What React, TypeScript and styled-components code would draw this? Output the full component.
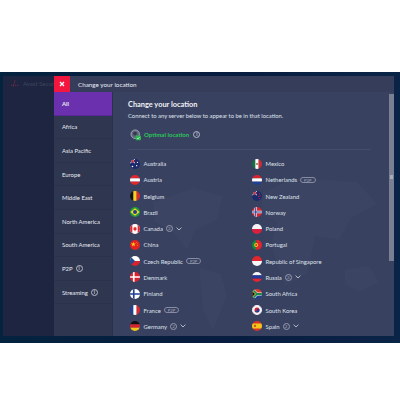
import React from "react";
import styled, { createGlobalStyle } from "styled-components";

const Global = createGlobalStyle`
  html, body { margin: 0; padding: 0; background: #fff; }
  #root { width: 400px; height: 416px; overflow: hidden; }
  * { box-sizing: border-box; }
`;

const Page = styled.div`
  width: 400px;
  height: 416px;
  padding-top: 72px;
  font-family: Lato, "Open Sans", sans-serif;
  color: #e6e8f0;
`;
const Frame = styled.div`
  height: 271px;
  padding: 4px 6px 7px 3px;
  background: linear-gradient(90deg, #04233f 0%, #071c3e 50%, #0a2447 100%);
  display: flex;
`;
const Sidebar = styled.aside`
  width: 51px;
  flex: none;
  background: #1e2540;
  padding: 3px 0 0 7px;
  display: flex;
  align-items: flex-start;
  gap: 3px;
  overflow: hidden;
`;
const BrandLogo = styled.svg`
  width: 10px;
  height: 9px;
  flex: none;
`;
const BrandText = styled.span`
  font-size: 6px;
  line-height: 9px;
  color: #3f455b;
  white-space: nowrap;
`;
const Panel = styled.div`
  flex: 1;
  min-width: 0;
  display: flex;
  flex-direction: column;
  background: #343c58;
`;
const TitleBar = styled.header`
  height: 16px;
  flex: none;
  display: flex;
  align-items: center;
  background: #353d5a;
`;
const CloseButton = styled.div`
  width: 16px;
  height: 16px;
  flex: none;
  background: #f3173f;
  display: grid;
  place-items: center;
`;
const TitleText = styled.span`
  margin-left: 8px;
  font-size: 6.3px;
  color: #e8eaf2;
`;
const Body = styled.div`
  flex: 1;
  min-height: 0;
  display: flex;
`;
const Menu = styled.nav`
  width: 59px;
  flex: none;
  background: #2e3650;
  border-right: 1px solid #2a3149;
`;
const MenuItem = styled.div<{ $active?: boolean }>`
  height: 23.6px;
  padding-left: 8px;
  display: flex;
  align-items: center;
  gap: 3px;
  font-size: 5.9px;
  color: #e8eaf2;
  font-weight: ${(p) => (p.$active ? 700 : 400)};
  background: ${(p) => (p.$active ? "#6a30ad" : "transparent")};
  border-bottom: 1px solid ${(p) => (p.$active ? "#5a2a98" : "#2b324b")};
`;
const Content = styled.main`
  position: relative;
  flex: 1;
  min-width: 0;
  padding: 7.5px 0 0 15px;
  background: #394160;
  overflow: hidden;
`;
const MapArt = styled.svg`
  position: absolute;
  left: 0;
  top: 60px;
  width: 276px;
  height: 185px;
`;
const Scrollbar = styled.div`
  position: absolute;
  top: 2px;
  right: 0;
  width: 5.5px;
  height: 167px;
  background: #7a8094;
`;
const ScrollGrip = styled.div`
  position: absolute;
  top: 81px;
  left: 1px;
  width: 3.5px;
  height: 4px;
  background: #a9adba;
`;
const Heading = styled.h1`
  position: relative;
  margin: 0;
  font-size: 7.4px;
  line-height: 9px;
  font-weight: 700;
  color: #f1f2f7;
`;
const Lead = styled.p`
  position: relative;
  margin: 2px 0 0;
  font-size: 5.85px;
  line-height: 9px;
  color: #dfe2ec;
`;
const Optimal = styled.div`
  position: relative;
  margin-top: 9px;
  padding-left: 2px;
  display: flex;
  align-items: center;
  height: 12px;
  font-size: 6.1px;
  font-weight: 700;
  color: #2bc45a;
`;
const OptimalLabel = styled.span`
  margin: 0 4px 0 2px;
`;
const Divider = styled.hr`
  position: relative;
  width: 243px;
  margin: 8px 0 6px;
  border: none;
  border-top: 1px solid #454d6a;
`;
const Columns = styled.div`
  position: relative;
  padding-left: 2px;
  display: grid;
  grid-template-columns: 122px 1fr;
  grid-auto-flow: column;
  grid-template-rows: repeat(11, 16.28px);
`;
const Row = styled.div`
  display: flex;
  align-items: center;
  font-size: 5.9px;
  color: #dfe2ec;
  white-space: nowrap;
`;
const FlagSvg = styled.svg`
  width: 10px;
  height: 10px;
  flex: none;
  border-radius: 50%;
  margin-right: 3.5px;
`;
const Pill = styled.span`
  margin-left: 3px;
  padding: 0 3px;
  height: 6px;
  line-height: 5px;
  font-size: 4.2px;
  border: 0.6px solid #868ca2;
  border-radius: 3px;
  color: #a4a9bb;
`;
const Count = styled.span`
  margin-left: 3px;
  width: 7px;
  height: 7px;
  border-radius: 50%;
  border: 0.6px solid #969bb0;
  font-size: 4.4px;
  line-height: 5.8px;
  text-align: center;
  color: #a4a9bb;
`;
const InfoMark = styled.span`
  width: 7px;
  height: 7px;
  flex: none;
  border-radius: 50%;
  border: 0.7px solid #b6bac8;
  font-size: 4.6px;
  font-weight: 700;
  line-height: 5.6px;
  text-align: center;
  color: #c9ccd8;
`;
const Chevron = styled.svg`
  width: 6px;
  height: 4px;
  margin-left: 3px;
`;

type FlagName = keyof typeof flags;
const tri = (a: string, b: string, c: string) => (
  <>
    <rect width="4" height="12" fill={a} />
    <rect x="4" width="4" height="12" fill={b} />
    <rect x="8" width="4" height="12" fill={c} />
  </>
);
const hz = (a: string, b: string, c: string) => (
  <>
    <rect width="12" height="4" fill={a} />
    <rect y="4" width="12" height="4" fill={b} />
    <rect y="8" width="12" height="4" fill={c} />
  </>
);
const ensign = (
  <>
    <rect width="12" height="12" fill="#1a2a6c" />
    <path d="M0 0l6 5M6 0L0 5" stroke="#fff" strokeWidth="1" />
    <path d="M3 0v5M0 2.5h6" stroke="#d8232f" strokeWidth="1" />
  </>
);
const nordic = (bg: string, cross: string, inner?: string) => (
  <>
    <rect width="12" height="12" fill={bg} />
    <path d="M4.5 0v12M0 6h12" stroke={cross} strokeWidth={inner ? 3 : 2} />
    {inner && <path d="M4.5 0v12M0 6h12" stroke={inner} strokeWidth="1.4" />}
  </>
);
const flags = {
  au: <>{ensign}<circle cx="9" cy="4" r=".8" fill="#fff" /><circle cx="8" cy="8" r=".8" fill="#fff" /><circle cx="3" cy="9" r="1" fill="#fff" /></>,
  at: hz("#e0262e", "#fff", "#e0262e"),
  be: tri("#111", "#f5d020", "#e0262e"),
  br: <><rect width="12" height="12" fill="#1f9a3d" /><path d="M6 1.5L11.5 6 6 10.5.5 6z" fill="#f6d91f" /><circle cx="6" cy="6" r="2.4" fill="#1f3f94" /></>,
  ca: <><rect width="12" height="12" fill="#fff" /><rect width="2.8" height="12" fill="#e0262e" /><rect x="9.2" width="2.8" height="12" fill="#e0262e" /><path d="M6 3l1 1.6 1-.3-.4 2 .6.5-1.7.8v1H5.5v-1l-1.7-.8.6-.5-.4-2 1 .3z" fill="#e0262e" /></>,
  cn: <><rect width="12" height="12" fill="#e3211f" /><path d="M4 2.2l.7 2.1H7L5.2 5.6l.7 2.1L4 6.4 2.2 7.7l.7-2.1L1 4.3h2.3z" fill="#f7d51d" /><circle cx="7.8" cy="2.8" r=".5" fill="#f7d51d" /><circle cx="8.8" cy="4.6" r=".5" fill="#f7d51d" /><circle cx="8.6" cy="6.6" r=".5" fill="#f7d51d" /></>,
  cz: <><rect width="12" height="6" fill="#fff" /><rect y="6" width="12" height="6" fill="#d8232f" /><path d="M0 0l6 6-6 6z" fill="#1f4b93" /></>,
  dk: nordic("#d8232f", "#fff"),
  fi: nordic("#fff", "#1f3f94"),
  fr: tri("#1f3f94", "#fff", "#e0262e"),
  de: hz("#111", "#d8232f", "#f3c51b"),
  mx: <>{tri("#14713f", "#fff", "#cf2a35")}<circle cx="6" cy="6" r="1.2" fill="#8d6b3a" /></>,
  nl: hz("#d8232f", "#fff", "#1f3f94"),
  nz: <>{ensign}<circle cx="9" cy="3.5" r=".7" fill="#d8232f" /><circle cx="8" cy="6.5" r=".7" fill="#d8232f" /><circle cx="10" cy="6" r=".7" fill="#d8232f" /><circle cx="9" cy="9" r=".7" fill="#d8232f" /></>,
  no: nordic("#d8232f", "#fff", "#1f3f94"),
  pl: <><rect width="12" height="6" fill="#f4f4f6" /><rect y="6" width="12" height="6" fill="#dc1f3c" /></>,
  pt: <><rect width="5" height="12" fill="#128a3c" /><rect x="5" width="7" height="12" fill="#e0262e" /><circle cx="5" cy="6" r="2.4" fill="#f4d21f" /><circle cx="5" cy="6" r="1.2" fill="#d8232f" /></>,
  sg: <><rect width="12" height="6" fill="#e0262e" /><rect y="6" width="12" height="6" fill="#f6f6f8" /></>,
  ru: hz("#f6f6f8", "#27389c", "#e0262e"),
  za: <><rect width="12" height="6" fill="#de3a2f" /><rect y="6" width="12" height="6" fill="#1f3f94" /><path d="M0 0l6 6-6 6M6 6h6" stroke="#fff" strokeWidth="3.4" fill="none" /><path d="M0 0l6 6-6 6M6 6h6" stroke="#1c8a46" strokeWidth="2.2" fill="none" /><path d="M0 2l4 4-4 4z" fill="#111" stroke="#f4c81f" strokeWidth=".7" /></>,
  kr: <><rect width="12" height="12" fill="#f6f6f8" /><circle cx="6" cy="6" r="3" fill="#d8232f" /><path d="M3 6a3 3 0 0 0 6 0 1.5 1.5 0 0 0-3 0 1.5 1.5 0 0 1-3 0z" fill="#1f3f94" /><path d="M1 3l1.5-1.6M1 9l1.5 1.6M11 3L9.5 1.4M11 9l-1.5 1.6" stroke="#222" strokeWidth=".8" /></>,
  es: <><rect width="12" height="12" fill="#d8322a" /><rect y="3" width="12" height="6" fill="#f3c51b" /><rect x="2.6" y="4.6" width="2" height="2.6" fill="#b5482a" /></>,
};

const Flag = ({ name }: { name: FlagName }) => (
  <FlagSvg viewBox="0 0 12 12" aria-hidden="true">{flags[name]}</FlagSvg>
);

type Country = { name: string; flag: FlagName; p2p?: boolean; count?: number };
const countries: Country[] = [
  { name: "Australia", flag: "au" },
  { name: "Austria", flag: "at" },
  { name: "Belgium", flag: "be" },
  { name: "Brazil", flag: "br" },
  { name: "Canada", flag: "ca", count: 2 },
  { name: "China", flag: "cn" },
  { name: "Czech Republic", flag: "cz", p2p: true },
  { name: "Denmark", flag: "dk" },
  { name: "Finland", flag: "fi" },
  { name: "France", flag: "fr", p2p: true },
  { name: "Germany", flag: "de", count: 2 },
  { name: "Mexico", flag: "mx" },
  { name: "Netherlands", flag: "nl", p2p: true },
  { name: "New Zealand", flag: "nz" },
  { name: "Norway", flag: "no" },
  { name: "Poland", flag: "pl" },
  { name: "Portugal", flag: "pt" },
  { name: "Republic of Singapore", flag: "sg" },
  { name: "Russia", flag: "ru", count: 2 },
  { name: "South Africa", flag: "za" },
  { name: "South Korea", flag: "kr" },
  { name: "Spain", flag: "es", count: 2 },
];
const regions = ["All", "Africa", "Asia Pacific", "Europe", "Middle East", "North America", "South America", "P2P", "Streaming"];

export default function App() {
  return (
    <Page>
      <Global />
      <Frame>
        <Sidebar>
          <BrandLogo viewBox="0 0 11 9" aria-hidden="true">
            <path d="M1 6.5h8M5.5 1L3.5 8" stroke="#7a2a4a" strokeWidth="1" fill="none" strokeDasharray="1.4 .8" />
          </BrandLogo>
          <BrandText>Avast SecureLine</BrandText>
        </Sidebar>
        <Panel>
          <TitleBar>
            <CloseButton>
              <svg width="6" height="6" viewBox="0 0 6 6" aria-hidden="true">
                <path d="M1 1l4 4M5 1L1 5" stroke="#fff" strokeWidth="1.3" />
              </svg>
            </CloseButton>
            <TitleText>Change your location</TitleText>
          </TitleBar>
          <Body>
            <Menu>
              {regions.map((r, i) => (
                <MenuItem key={r} $active={i === 0}>
                  {r}
                  {(r === "P2P" || r === "Streaming") && <InfoMark>i</InfoMark>}
                </MenuItem>
              ))}
            </Menu>
            <Content>
              <MapArt viewBox="0 0 276 185" aria-hidden="true">
                <g fill="#3c4463">
                  <path d="M40 50l40-14 30 8-6 24-22 10-8 20-14-18-18-10z" />
                  <path d="M86 116l22 6 6 22-14 34-10-20z" />
                  <path d="M150 40l34-14 60 4 20 22-26 14-12 22-24-4-8 38-22 12-14-40 6-24-16-10z" />
                  <path d="M232 118l24-4 10 16-20 10-14-8z" />
                </g>
              </MapArt>
              <Scrollbar><ScrollGrip /></Scrollbar>
              <Heading>Change your location</Heading>
              <Lead>Connect to any server below to appear to be in that location.</Lead>
              <Optimal>
                <svg width="12" height="12" viewBox="0 0 12 12" aria-hidden="true">
                  <circle cx="5.2" cy="5.2" r="4.2" fill="#5b6279" stroke="#aab0bf" strokeWidth="0.9" />
                  <circle cx="5" cy="4.6" r="1.8" fill="#33394f" />
                  <rect x="5.6" y="6.6" width="5.4" height="4.6" rx="1" fill="#2bb84e" />
                  <path d="M7 9l1 1 1.6-1.8" stroke="#fff" strokeWidth=".6" fill="none" />
                </svg>
                <OptimalLabel>Optimal location</OptimalLabel>
                <InfoMark>i</InfoMark>
              </Optimal>
              <Divider />
              <Columns>
                {countries.map((c) => (
                  <Row key={c.name}>
                    <Flag name={c.flag} />
                    {c.name}
                    {c.p2p && <Pill>P2P</Pill>}
                    {c.count && <Count>{c.count}</Count>}
                    {c.count && (
                      <Chevron viewBox="0 0 6 4" aria-hidden="true">
                        <path d="M.6.6L3 3 5.4.6" stroke="#d5d8e2" strokeWidth=".8" fill="none" />
                      </Chevron>
                    )}
                  </Row>
                ))}
              </Columns>
            </Content>
          </Body>
        </Panel>
      </Frame>
    </Page>
  );
}
